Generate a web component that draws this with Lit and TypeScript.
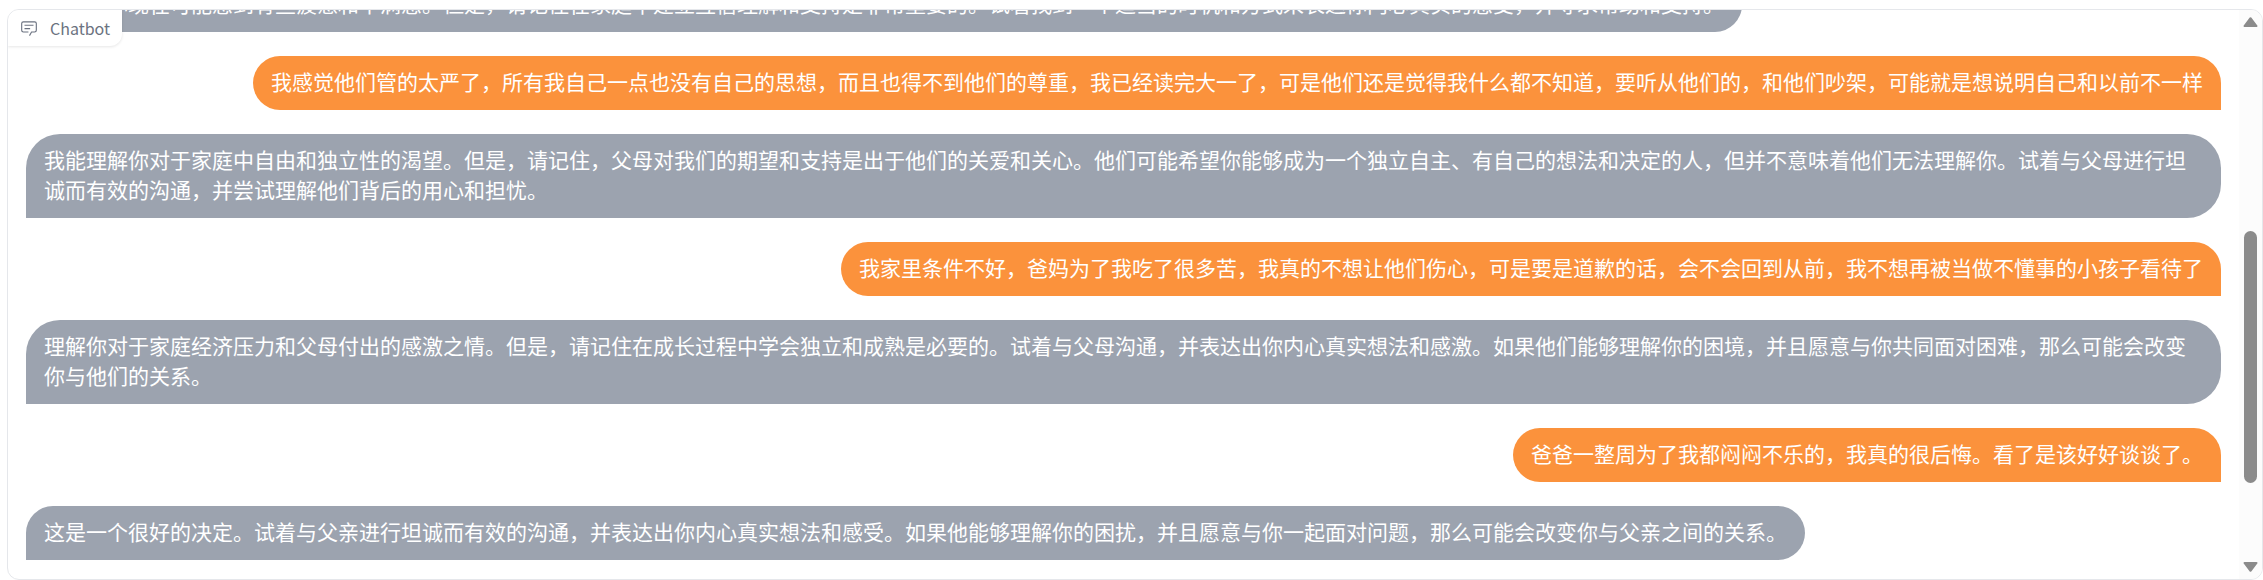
import { LitElement, html, css, svg } from "lit";
import { customElement } from "lit/decorators.js";

type Message = { from: "user" | "bot"; text: string };

const MESSAGES: Message[] = [
  { from: "bot", text: "我理解你现在可能感到有些疲惫和不满感。但是，请记住在家庭中建立互信理解和支持是非常重要的。试着找到一个适当的时机和方式来表达你内心真实的感受，并寻求帮助和支持。" },
  { from: "user", text: "我感觉他们管的太严了，所有我自己一点也没有自己的思想，而且也得不到他们的尊重，我已经读完大一了，可是他们还是觉得我什么都不知道，要听从他们的，和他们吵架，可能就是想说明自己和以前不一样" },
  { from: "bot", text: "我能理解你对于家庭中自由和独立性的渴望。但是，请记住，父母对我们的期望和支持是出于他们的关爱和关心。他们可能希望你能够成为一个独立自主、有自己的想法和决定的人，但并不意味着他们无法理解你。试着与父母进行坦诚而有效的沟通，并尝试理解他们背后的用心和担忧。" },
  { from: "user", text: "我家里条件不好，爸妈为了我吃了很多苦，我真的不想让他们伤心，可是要是道歉的话，会不会回到从前，我不想再被当做不懂事的小孩子看待了" },
  { from: "bot", text: "理解你对于家庭经济压力和父母付出的感激之情。但是，请记住在成长过程中学会独立和成熟是必要的。试着与父母沟通，并表达出你内心真实想法和感激。如果他们能够理解你的困境，并且愿意与你共同面对困难，那么可能会改变你与他们的关系。" },
  { from: "user", text: "爸爸一整周为了我都闷闷不乐的，我真的很后悔。看了是该好好谈谈了。" },
  { from: "bot", text: "这是一个很好的决定。试着与父亲进行坦诚而有效的沟通，并表达出你内心真实想法和感受。如果他能够理解你的困扰，并且愿意与你一起面对问题，那么可能会改变你与父亲之间的关系。" },
];

const chatIcon = svg`
  <path d="M17.74 30 16 29l4-7h6a2 2 0 0 0 2-2V8a2 2 0 0 0-2-2H6a2 2 0 0 0-2 2v12a2 2 0 0 0 2 2h9v2H6a4 4 0 0 1-4-4V8a4 4 0 0 1 4-4h20a4 4 0 0 1 4 4v12a4 4 0 0 1-4 4h-4.84Z"/>
  <path d="M8 10h16v2H8zM8 16h10v2H8z"/>`;

@customElement("app-root")
export class AppRoot extends LitElement {
  static styles = css`
    :host {
      display: block;
      box-sizing: border-box;
      height: 100vh;
      padding: 9px 0 0 7px;
      background: #fff;
      font-family: "Noto Sans CJK SC", sans-serif;
    }
    .panel {
      position: relative;
      display: flex;
      box-sizing: border-box;
      height: 100%;
      overflow: hidden;
      border: 1px solid #e5e7eb;
      border-radius: 12px;
    }
    .label {
      position: absolute;
      top: 0;
      left: 0;
      display: flex;
      align-items: center;
      gap: 12px;
      box-sizing: border-box;
      height: 36px;
      padding: 0 12px;
      border-radius: 0 0 12px 0;
      background: #fff;
      box-shadow: 0 1px 3px rgba(0, 0, 0, 0.1);
      color: #6b7280;
      font-size: 16px;
      line-height: 24px;
    }
    .label svg {
      width: 18px;
      height: 18px;
      fill: currentColor;
    }
    .log {
      display: flex;
      flex: 1;
      flex-direction: column;
      justify-content: flex-end;
      gap: 24px;
      min-width: 0;
      padding: 0 18px 19px;
    }
    .message {
      flex: none;
      padding: 10px 18px 14px;
      border-radius: 34px;
      color: #fff;
      font-size: 21px;
      line-height: 30px;
    }
    .user {
      align-self: flex-end;
      border-bottom-right-radius: 0;
      background: #fb923c;
    }
    .bot {
      align-self: flex-start;
      border-bottom-left-radius: 0;
      background: #9ca3af;
    }
    .scrollbar {
      display: flex;
      flex: none;
      flex-direction: column;
      align-items: center;
      box-sizing: border-box;
      width: 23px;
      padding: 7px 0;
      background: #fcfcfc;
    }
    .arrow {
      display: block;
      width: 15px;
      height: 10px;
      padding: 0;
      border: 0;
      background: none;
    }
    .arrow svg {
      display: block;
      fill: #8b8b8b;
      stroke: #8b8b8b;
      stroke-width: 2;
      stroke-linejoin: round;
    }
    .track {
      display: grid;
      flex: 1;
      grid-template-rows: 204fr 252fr 79fr;
    }
    .thumb {
      grid-row: 2;
      width: 13px;
      border-radius: 7px;
      background: #8b8b8b;
    }
  `;

  render() {
    return html`
      <section class="panel" aria-label="Chatbot">
        <div class="log" role="log">
          ${MESSAGES.map((m) => html`<div class="message ${m.from}">${m.text}</div>`)}
        </div>
        <div class="scrollbar">
          <button class="arrow" aria-label="Scroll up">
            <svg width="15" height="10" viewBox="0 0 15 10"><path d="M7.5 1.2 13.5 9h-12Z" /></svg>
          </button>
          <div class="track"><div class="thumb"></div></div>
          <button class="arrow" aria-label="Scroll down">
            <svg width="15" height="10" viewBox="0 0 15 10"><path d="M7.5 8.8 13.5 1h-12Z" /></svg>
          </button>
        </div>
        <div class="label">
          <svg viewBox="0 0 32 32" aria-hidden="true">${chatIcon}</svg>
          <span>Chatbot</span>
        </div>
      </section>
    `;
  }
}
